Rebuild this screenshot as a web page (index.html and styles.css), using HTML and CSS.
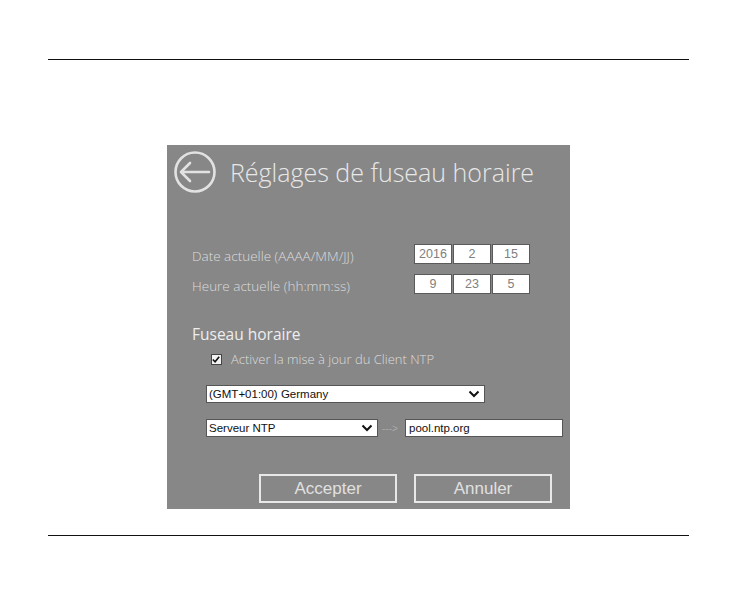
FILE: index.html
```html
<!DOCTYPE html>
<html lang="fr">
<head>
  <meta charset="UTF-8">
  <meta name="viewport" content="width=device-width, initial-scale=1.0">
  <title>Réglages de fuseau horaire</title>
  <link rel="stylesheet" href="styles.css">
</head>

<body>
  <div class="page">
    <hr class="rule">

    <div class="panel">
      <div class="head">
        <svg class="back" width="44" height="44" viewBox="0 0 44 44">
          <circle cx="22" cy="22" r="19.5" fill="none" stroke="#e2e2e2" stroke-width="2.6"/>
          <path d="M8 22 H36 M8 22 L17 13 M8 22 L17 31" fill="none" stroke="#e2e2e2" stroke-width="2.6" stroke-linecap="round"/>
        </svg>
        <h1>Réglages de fuseau horaire</h1>
      </div>

      <div class="rows">
        <div class="row">
          <span class="label">Date actuelle (AAAA/MM/JJ)</span>
          <div class="boxes">
            <span class="box">2016</span>
            <span class="box">2</span>
            <span class="box">15</span>
          </div>
        </div>
        <div class="row">
          <span class="label">Heure actuelle (hh:mm:ss)</span>
          <div class="boxes">
            <span class="box">9</span>
            <span class="box">23</span>
            <span class="box">5</span>
          </div>
        </div>
      </div>

      <h2>Fuseau horaire</h2>

      <div class="check">
        <span class="tick">
          <svg width="11" height="11" viewBox="0 0 11 11">
            <path d="M2 5.5 L4.5 8 L9 2.5" fill="none" stroke="#111" stroke-width="1.8"/>
          </svg>
        </span>
        <span>Activer la mise à jour du Client NTP</span>
      </div>

      <div class="select wide">
        <span>(GMT+01:00) Germany</span>
        <svg width="12" height="8" viewBox="0 0 12 8"><path d="M1.5 1.5 L6 6 L10.5 1.5" fill="none" stroke="#111" stroke-width="2"/></svg>
      </div>

      <div class="server">
        <div class="select narrow">
          <span>Serveur NTP</span>
          <svg width="12" height="8" viewBox="0 0 12 8"><path d="M1.5 1.5 L6 6 L10.5 1.5" fill="none" stroke="#111" stroke-width="2"/></svg>
        </div>
        <span class="arrow">---&gt;</span>
        <div class="input">pool.ntp.org</div>
      </div>

      <div class="actions">
        <button class="btn">Accepter</button>
        <button class="btn">Annuler</button>
      </div>
    </div>

    <hr class="rule bottom">
  </div>
</body>
</html>
```

FILE: styles.css
```css
body {
  margin: 0;
  background: #fff;
  font-family: "Liberation Sans", Arial, sans-serif;
}

.page {
  width: 738px;
  height: 596px;
  overflow: hidden;
}

.rule {
  margin: 59px 0 0 48px;
  width: 641px;
  height: 0;
  border: none;
  border-top: 1.5px solid #111;
}

.rule.bottom {
  margin-top: 26px;
}

.panel {
  margin: 85px 0 0 167px;
  width: 403px;
  height: 364px;
  box-sizing: border-box;
  background: #878787;
  padding: 5px 0 0 25px;
  display: flex;
  flex-direction: column;
}

.head {
  display: flex;
  align-items: center;
  margin-left: -19px;
  height: 44px;
}

.back {
  flex: none;
}

h1 {
  margin: 0 0 0 13px;
  font-family: "Open Sans", "Noto Sans", sans-serif;
  font-weight: 300;
  font-size: 25px;
  line-height: 30px;
  color: #e8e8e8;
}

.rows {
  margin-top: 50px;
  display: flex;
  flex-direction: column;
  gap: 10px;
}

.row {
  display: flex;
  align-items: center;
  height: 20px;
}

.label {
  width: 222px;
  padding-top: 3px;
  font-family: "Open Sans", "Noto Sans", sans-serif;
  font-weight: 300;
  font-size: 13.5px;
  color: #dcdcdc;
}

.boxes {
  display: flex;
  gap: 1px;
}

.box {
  width: 38px;
  height: 20px;
  box-sizing: border-box;
  border: 1px solid #5a5a5a;
  background: #fff;
  color: #808080;
  font-size: 12.5px;
  display: flex;
  align-items: center;
  justify-content: center;
}

h2 {
  margin: 30px 0 0;
  font-family: "Open Sans", "Noto Sans", sans-serif;
  font-weight: 400;
  font-size: 15.5px;
  line-height: 20px;
  color: #eeeeee;
}

.check {
  margin: 9px 0 0 19px;
  display: flex;
  align-items: center;
  gap: 9px;
  font-family: "Open Sans", "Noto Sans", sans-serif;
  font-weight: 300;
  font-size: 13px;
  color: #dcdcdc;
  height: 12px;
}

.tick {
  width: 11px;
  height: 11px;
  box-sizing: border-box;
  background: #f2f2f2;
  border: 1px solid #444;
  display: flex;
}

.tick svg {
  margin: -1px 0 0 -1px;
}

.select {
  margin-left: 14px;
  height: 18px;
  box-sizing: border-box;
  border: 1px solid #555;
  background: #fff;
  display: flex;
  align-items: center;
  justify-content: space-between;
  padding: 0 4px 0 2px;
  font-size: 11.5px;
  color: #111;
}

.select.wide {
  margin-top: 20px;
  width: 279px;
}

.server {
  margin: 16px 0 0 14px;
  display: flex;
  align-items: center;
  height: 18px;
}

.server .select {
  margin-left: 0;
}

.select.narrow {
  width: 172px;
}

.arrow {
  margin: 0 4px 0 4px;
  font-size: 10px;
  color: #aaa;
  width: 19px;
}

.input {
  width: 158px;
  height: 18px;
  box-sizing: border-box;
  border: 1px solid #555;
  background: #fff;
  padding: 0 3px;
  font-size: 11.5px;
  display: flex;
  align-items: center;
  color: #111;
}

.actions {
  margin: 37px 0 0 67px;
  display: flex;
  gap: 17px;
}

.btn {
  width: 138px;
  height: 29px;
  box-sizing: border-box;
  background: transparent;
  border: 2px solid #e8e8e8;
  color: #e0e0e0;
  font-family: "Liberation Sans", Arial, sans-serif;
  font-size: 17px;
  padding: 0;
}
```
